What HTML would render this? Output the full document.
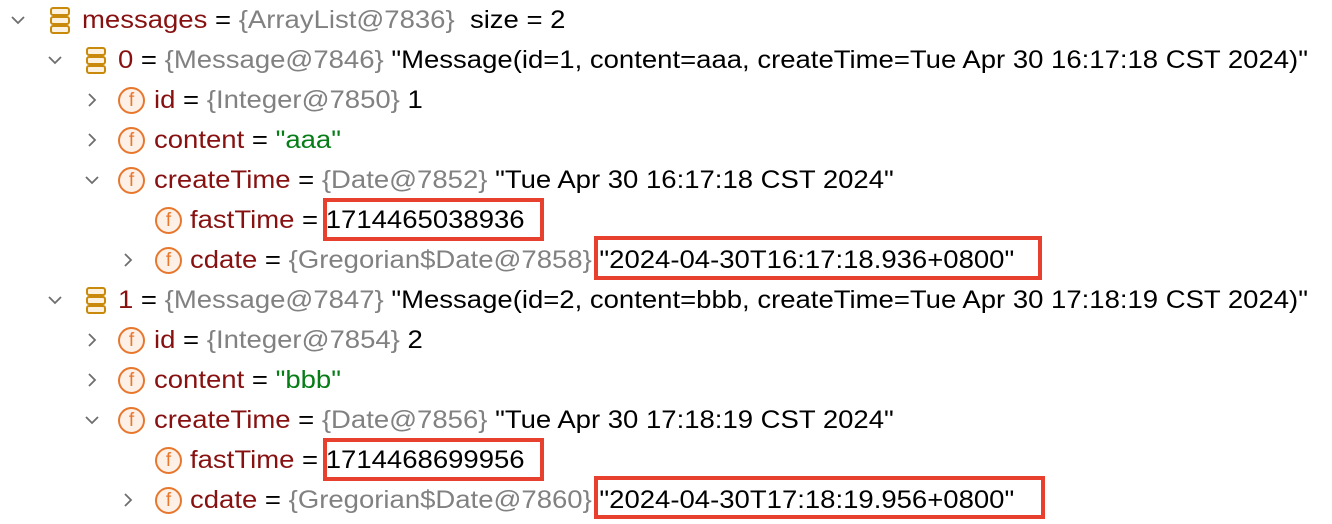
<!DOCTYPE html>
<html><head><meta charset="utf-8"><style>
body{margin:0;width:1332px;height:524px;background:#fff;overflow:hidden;font-family:"Liberation Sans",Arial,sans-serif;font-size:25px;position:relative}
.r{position:absolute;height:40px;line-height:40px;white-space:nowrap;color:#000;transform:scaleX(1.1);transform-origin:0 50%}
.n{color:#871111}.g{color:#818181}.s{color:#067d17}
.chev{position:absolute;width:14px;height:14px}
.li{position:absolute;width:20px;height:27px}
.f{position:absolute;width:23px;height:23px;border:2px solid #e8772e;border-radius:50%;background:#fdf1e7;color:#e8772e;font-size:19px;line-height:23px;text-align:center}
.box{position:absolute;border:4px solid #e8402f;box-sizing:border-box}
</style></head><body>
<svg width="0" height="0" style="position:absolute"><defs>
<symbol id="down" viewBox="0 0 14 14"><path d="M1 4 L7 10 L13 4" fill="none" stroke="#6e6e6e" stroke-width="1.8"/></symbol>
<symbol id="right" viewBox="0 0 14 14"><path d="M4 1 L10 7 L4 13" fill="none" stroke="#6e6e6e" stroke-width="1.8"/></symbol>
<symbol id="list" viewBox="0 0 20 27"><g fill="#fdf1e0" stroke="#c98a0b" stroke-width="2"><rect x="1" y="1" width="18" height="7" rx="2"/><rect x="1" y="10" width="18" height="7" rx="2"/><rect x="1" y="19" width="18" height="7" rx="2"/></g></symbol>
</defs></svg>

<svg class="chev" style="left:11px;top:13px"><use href="#down"/></svg>
<svg class="li" style="left:50px;top:7px"><use href="#list"/></svg>
<div class="r" style="left:82px;top:0"><span class="n">messages</span> = <span class="g">{ArrayList@7836}</span> &nbsp;size = 2</div>
<svg class="chev" style="left:48px;top:53px"><use href="#down"/></svg>
<svg class="li" style="left:86px;top:47px"><use href="#list"/></svg>
<div class="r" style="left:118px;top:40px"><span class="n">0</span> = <span class="g">{Message@7846}</span> "Message(id=1, content=aaa, createTime=Tue Apr 30 16:17:18 CST 2024)"</div>
<svg class="chev" style="left:85px;top:93px"><use href="#right"/></svg>
<div class="f" style="left:118px;top:87px">f</div>
<div class="r" style="left:154px;top:80px"><span class="n">id</span> = <span class="g">{Integer@7850}</span> 1</div>
<svg class="chev" style="left:85px;top:133px"><use href="#right"/></svg>
<div class="f" style="left:118px;top:127px">f</div>
<div class="r" style="left:154px;top:120px"><span class="n">content</span> = <span class="s">"aaa"</span></div>
<svg class="chev" style="left:85px;top:173px"><use href="#down"/></svg>
<div class="f" style="left:118px;top:167px">f</div>
<div class="r" style="left:154px;top:160px"><span class="n">createTime</span> = <span class="g">{Date@7852}</span> "Tue Apr 30 16:17:18 CST 2024"</div>
<div class="f" style="left:155px;top:207px">f</div>
<div class="r" style="left:190px;top:200px"><span class="n">fastTime</span> = 1714465038936</div>
<div class="box" style="left:323px;top:198px;width:221px;height:43px"></div>
<svg class="chev" style="left:121px;top:253px"><use href="#right"/></svg>
<div class="f" style="left:155px;top:247px">f</div>
<div class="r" style="left:190px;top:240px"><span class="n">cdate</span> = <span class="g">{Gregorian$Date@7858}</span> "2024-04-30T16:17:18.936+0800"</div>
<div class="box" style="left:594px;top:236px;width:448px;height:44px"></div>

<svg class="chev" style="left:48px;top:293px"><use href="#down"/></svg>
<svg class="li" style="left:86px;top:287px"><use href="#list"/></svg>
<div class="r" style="left:118px;top:280px"><span class="n">1</span> = <span class="g">{Message@7847}</span> "Message(id=2, content=bbb, createTime=Tue Apr 30 17:18:19 CST 2024)"</div>
<svg class="chev" style="left:85px;top:333px"><use href="#right"/></svg>
<div class="f" style="left:118px;top:327px">f</div>
<div class="r" style="left:154px;top:320px"><span class="n">id</span> = <span class="g">{Integer@7854}</span> 2</div>
<svg class="chev" style="left:85px;top:373px"><use href="#right"/></svg>
<div class="f" style="left:118px;top:367px">f</div>
<div class="r" style="left:154px;top:360px"><span class="n">content</span> = <span class="s">"bbb"</span></div>
<svg class="chev" style="left:85px;top:413px"><use href="#down"/></svg>
<div class="f" style="left:118px;top:407px">f</div>
<div class="r" style="left:154px;top:400px"><span class="n">createTime</span> = <span class="g">{Date@7856}</span> "Tue Apr 30 17:18:19 CST 2024"</div>
<div class="f" style="left:155px;top:447px">f</div>
<div class="r" style="left:190px;top:440px"><span class="n">fastTime</span> = 1714468699956</div>
<div class="box" style="left:323px;top:438px;width:221px;height:43px"></div>
<svg class="chev" style="left:121px;top:493px"><use href="#right"/></svg>
<div class="f" style="left:155px;top:487px">f</div>
<div class="r" style="left:190px;top:480px"><span class="n">cdate</span> = <span class="g">{Gregorian$Date@7860}</span> "2024-04-30T17:18:19.956+0800"</div>
<div class="box" style="left:594px;top:476px;width:451px;height:43px"></div>
</body></html>
